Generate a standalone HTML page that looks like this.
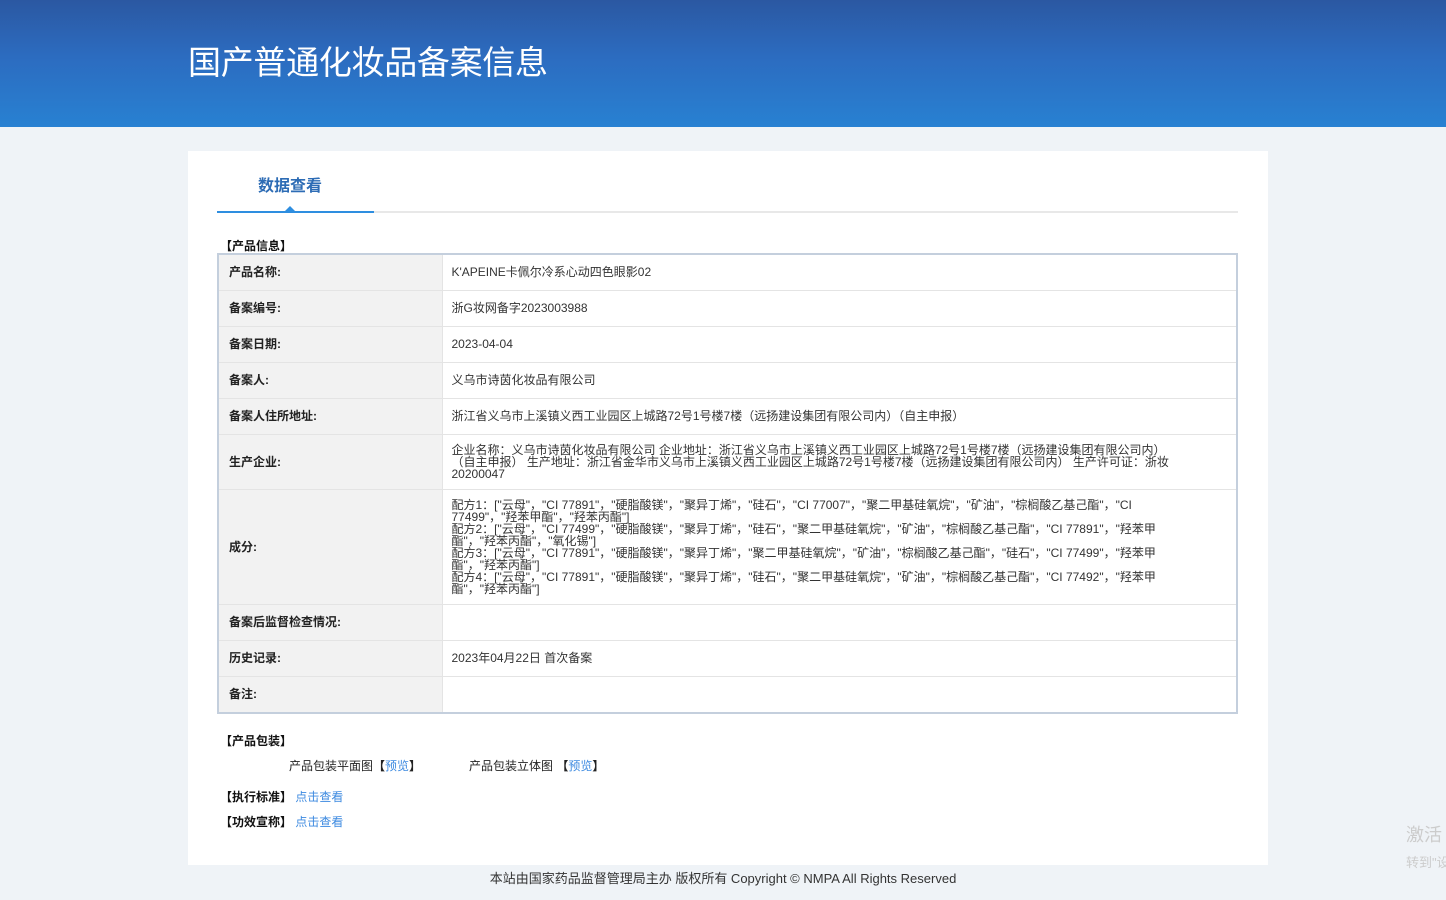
<!DOCTYPE html>
<html><head><meta charset="utf-8"><style>
*{margin:0;padding:0;box-sizing:border-box}
body{width:1446px;height:900px;background:#eff3f7;font-family:"Liberation Sans","Noto Sans CJK SC",sans-serif;font-size:12px;color:#333;position:relative;overflow:hidden}
.hd{position:absolute;left:0;top:0;width:1446px;height:127px;background:linear-gradient(180deg,#2b58a2 0%,#2c6cc0 45%,#2881d2 100%)}
.hd h1{position:absolute;left:188px;top:38px;font-size:33px;font-weight:normal;color:#fff;font-family:"Noto Sans CJK SC",sans-serif;line-height:44px;letter-spacing:-0.3px}
.card{position:absolute;left:188px;top:151px;width:1080px;height:714px;background:#fff}
.tab{position:absolute;left:258px;top:176px;font-size:16px;font-weight:bold;color:#2d6cb5;line-height:22px}
.line{position:absolute;left:217px;top:211px;width:1021px;height:2px;background:#e8e8e8}
.line2{position:absolute;left:217px;top:211px;width:157px;height:2px;background:#2e8ee0}
.tri{position:absolute;left:285px;top:206px;width:0;height:0;border-left:5px solid transparent;border-right:5px solid transparent;border-bottom:5px solid #2e8ee0}
.sec{position:absolute;font-weight:bold;color:#111;font-size:12px}
table{position:absolute;left:217px;top:253px;width:1021px;border-collapse:collapse;border:2px solid #c4cfdd}
td{border:1px solid #e4e4e4;vertical-align:middle;font-size:12px;line-height:12px}
td.l{width:224px;background:#f2f2f2;font-weight:bold;color:#222;padding-left:10px}
td.v{padding:0 60px 0 9px;color:#333}
a{color:#3d8ae0;text-decoration:none}
.ft{position:absolute;top:870px;left:0;width:1446px;text-align:center;font-size:13px;color:#333;line-height:18px}
.wm{position:absolute;left:1406px;top:824px;font-size:18px;color:#ccc;line-height:22px;white-space:nowrap}
.wm2{position:absolute;left:1406px;top:852px;font-size:13px;color:#ccc;white-space:nowrap}
</style></head><body>
<div class="hd"><h1>国产普通化妆品备案信息</h1></div>
<div class="card"></div>
<div class="tab">数据查看</div>
<div class="line"></div><div class="line2"></div><div class="tri"></div>
<div class="sec" style="left:220px;top:237px">【产品信息】</div>
<table>
<tr style="height:36px"><td class="l">产品名称:</td><td class="v">K'APEINE卡佩尔冷系心动四色眼影02</td></tr>
<tr style="height:36px"><td class="l">备案编号:</td><td class="v">浙G妆网备字2023003988</td></tr>
<tr style="height:36px"><td class="l">备案日期:</td><td class="v">2023-04-04</td></tr>
<tr style="height:36px"><td class="l">备案人:</td><td class="v">义乌市诗茵化妆品有限公司</td></tr>
<tr style="height:36px"><td class="l">备案人住所地址:</td><td class="v">浙江省义乌市上溪镇义西工业园区上城路72号1号楼7楼（远扬建设集团有限公司内）（自主申报）</td></tr>
<tr style="height:55px"><td class="l">生产企业:</td><td class="v">企业名称：义乌市诗茵化妆品有限公司 企业地址：浙江省义乌市上溪镇义西工业园区上城路72号1号楼7楼（远扬建设集团有限公司内）<br>（自主申报） 生产地址：浙江省金华市义乌市上溪镇义西工业园区上城路72号1号楼7楼（远扬建设集团有限公司内） 生产许可证：浙妆20200047</td></tr>
<tr style="height:115px"><td class="l">成分:</td><td class="v">配方1：["云母"，"CI 77891"，"硬脂酸镁"，"聚异丁烯"，"硅石"，"CI 77007"，"聚二甲基硅氧烷"，"矿油"，"棕榈酸乙基己酯"，"CI 77499"，"羟苯甲酯"，"羟苯丙酯"]<br>配方2：["云母"，"CI 77499"，"硬脂酸镁"，"聚异丁烯"，"硅石"，"聚二甲基硅氧烷"，"矿油"，"棕榈酸乙基己酯"，"CI 77891"，"羟苯甲酯"，"羟苯丙酯"，"氧化锡"]<br>配方3：["云母"，"CI 77891"，"硬脂酸镁"，"聚异丁烯"，"聚二甲基硅氧烷"，"矿油"，"棕榈酸乙基己酯"，"硅石"，"CI 77499"，"羟苯甲酯"，"羟苯丙酯"]<br>配方4：["云母"，"CI 77891"，"硬脂酸镁"，"聚异丁烯"，"硅石"，"聚二甲基硅氧烷"，"矿油"，"棕榈酸乙基己酯"，"CI 77492"，"羟苯甲酯"，"羟苯丙酯"]</td></tr>
<tr style="height:36px"><td class="l">备案后监督检查情况:</td><td class="v"></td></tr>
<tr style="height:36px"><td class="l">历史记录:</td><td class="v">2023年04月22日 首次备案</td></tr>
<tr style="height:37px"><td class="l">备注:</td><td class="v"></td></tr>
</table>
<div class="sec" style="left:220px;top:732px">【产品包装】</div>
<div style="position:absolute;left:289px;top:757px;color:#222">产品包装平面图<b>【</b><a>预览</a><b>】</b></div>
<div style="position:absolute;left:469px;top:757px;color:#222">产品包装立体图 <b>【</b><a>预览</a><b>】</b></div>
<div class="sec" style="left:220px;top:788px">【执行标准】 <a style="font-weight:normal">点击查看</a></div>
<div class="sec" style="left:220px;top:813px">【功效宣称】 <a style="font-weight:normal">点击查看</a></div>
<div class="ft">本站由国家药品监督管理局主办 版权所有 Copyright © NMPA All Rights Reserved</div>
<div class="wm">激活</div><div class="wm2">转到"设</div>
</body></html>
